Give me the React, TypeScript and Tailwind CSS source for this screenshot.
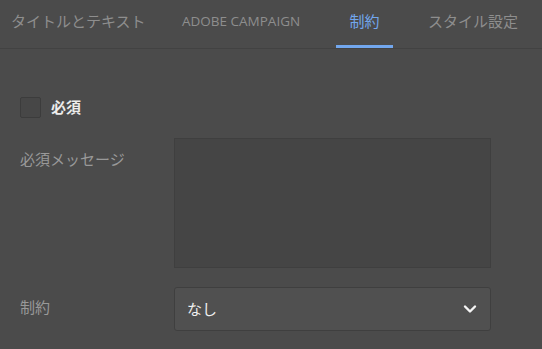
import React from "react";

export default function App() {
  const jp = { fontFamily: '"Noto Sans CJK JP", "Noto Sans", sans-serif' };
  return (
    <div className="w-[542px] h-[349px] bg-[#4b4b4b] overflow-hidden" style={jp}>
      <div className="h-[49px] flex items-stretch pl-[11px] border-b border-[#424242]">
        <div className="w-[171px] flex items-center text-[15px] text-[#8e8e8e] pb-[5px]">タイトルとテキスト</div>
        <div className="w-[154px] flex items-center text-[13.5px] text-[#8e8e8e] pb-[5px]" style={{ fontFamily: '"Open Sans", sans-serif' }}>ADOBE CAMPAIGN</div>
        <div className="w-[57px] relative flex items-center justify-center text-[15px] text-[#72a7ee] pb-[5px]">
          制約
          <div className="absolute left-0 right-0 bottom-0 h-[3px] bg-[#72a7ee]" />
        </div>
        <div className="flex items-center pl-[35px] text-[15px] text-[#8e8e8e] pb-[5px]">スタイル設定</div>
      </div>
      <div className="pl-[20px] pt-[47px]">
        <div className="flex items-center h-[22px]">
          <div className="w-[21px] h-[21px] bg-[#474747] border border-[#3c3c3c] rounded-[2px]" />
          <div className="ml-[10px] text-[15px] font-bold text-[#ececec]">必須</div>
        </div>
        <div className="flex mt-[20px]">
          <div className="w-[154px] text-[15px] text-[#999999] pt-[10px] leading-[22px]">必須メッセージ</div>
          <div className="w-[317px] h-[130px] bg-[#454545] border border-[#3f3f3f]" />
        </div>
        <div className="flex items-center mt-[19px]">
          <div className="w-[154px] text-[15px] text-[#999999] pb-[3px]">制約</div>
          <div className="w-[317px] h-[44px] bg-[#505050] border border-[#3f3f3f] rounded-[3px] flex items-center justify-between pl-[12px] pr-[13px]">
            <span className="text-[15px] text-[#f0f0f0]">なし</span>
            <svg width="14" height="14" viewBox="0 0 14 14">
              <path d="M2 4.5 L7 9.5 L12 4.5" fill="none" stroke="#f5f5f5" strokeWidth="2.4" strokeLinecap="round" strokeLinejoin="round" />
            </svg>
          </div>
        </div>
      </div>
    </div>
  );
}
